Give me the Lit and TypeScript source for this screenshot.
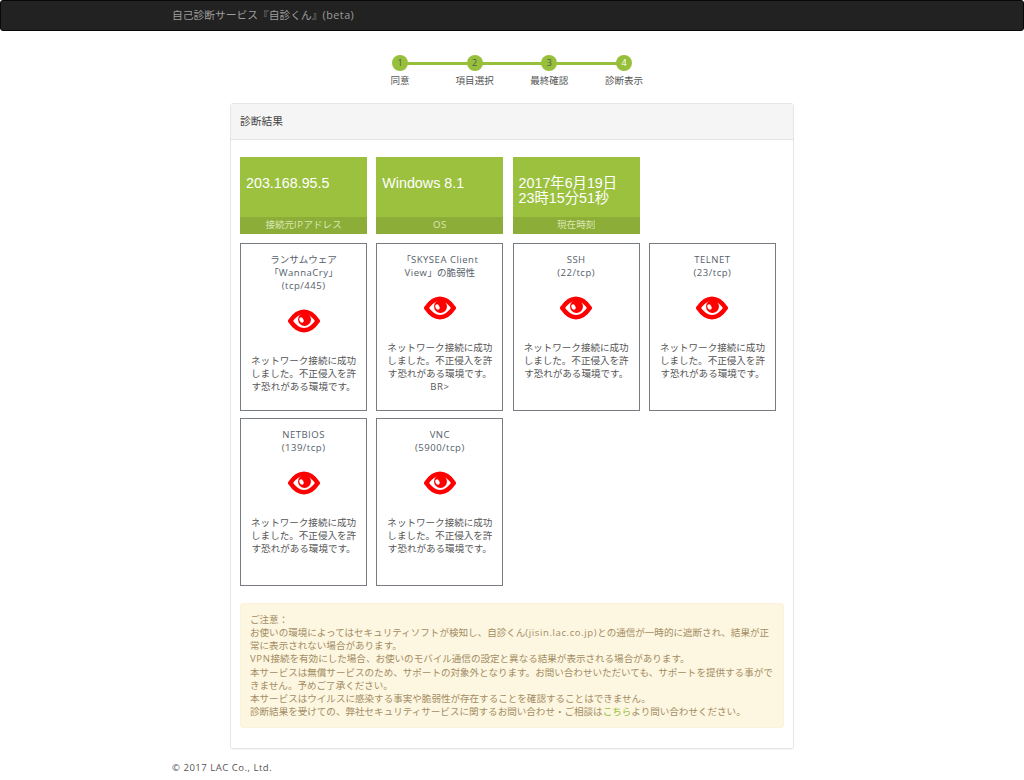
import { LitElement, html, css, svg } from "lit";
import { customElement } from "lit/decorators.js";

const MSG = "ネットワーク接続に成功しました。不正侵入を許す恐れがある環境です。";
const cards = [
  { t: ["ランサムウェア", "「WannaCry」", "(tcp/445)"], extra: "" },
  { t: ["「SKYSEA Client View」の脆弱性"], extra: "BR>" },
  { t: ["SSH", "(22/tcp)"], extra: "" },
  { t: ["TELNET", "(23/tcp)"], extra: "" },
  { t: ["NETBIOS", "(139/tcp)"], extra: "" },
  { t: ["VNC", "(5900/tcp)"], extra: "" },
];
const tiles = [
  { v: ["203.168.95.5"], l: "接続元IPアドレス" },
  { v: ["Windows 8.1"], l: "OS" },
  { v: ["2017年6月19日", "23時15分51秒"], l: "現在時刻" },
];
const steps = ["同意", "項目選択", "最終確認", "診断表示"];

/* The reference's Latin runs are set wider than its kana; wrap them so only they get the extra tracking. */
const t = (s: string) =>
  s.split(/([\x21-\x7e©](?:[\x20-\x7e©]*[\x21-\x7e©])?)/).map((p, i) =>
    i % 2 ? html`<span class="lat">${p}</span>` : p
  );

const eye = svg`<svg class="eye" viewBox="0 0 32 24" width="32" height="24" aria-hidden="true">
  <path fill="#fff" stroke="#f00" stroke-width="4.600" stroke-linejoin="round" d="M2.300 12C6.500 5.800 11 2.800 16 2.800S25.500 5.800 29.700 12C25.500 18.200 21 21.200 16 21.200S6.500 18.200 2.300 12z"/>
  <circle cx="16.500" cy="10.500" r="6.500" fill="#f00"/>
  <ellipse cx="13.500" cy="11" rx="2" ry="2.800" fill="#fff" transform="rotate(-25 13.500 11)"/>
</svg>`;

@customElement("app-root")
export class AppRoot extends LitElement {
  static styles = css`
    :host { display: block; width: 1024px; min-height: 780px; background: #fff; color: #555;
      font-family: "Open Sans", "Noto Sans CJK JP", sans-serif; font-size: 9.55px; line-height: 13.14px; text-spacing-trim: space-all; }
    * { box-sizing: border-box; }
    .lat { letter-spacing: .5px; }
    .nav { height: 31px; background: #222; border: 1px solid #080808; border-radius: 3px;
      padding-left: 171px; display: flex; align-items: center; color: #9d9d9d; font-size: 10.75px; }
    .steps { display: flex; justify-content: center; margin-top: 24px; height: 48px; }
    .step { width: 74.67px; position: relative; display: flex; flex-direction: column; align-items: center; }
    .dot { width: 16px; height: 16px; border-radius: 50%; background: #97c03a; color: #555; font-size: 9px;
      line-height: 16px; text-align: center; position: relative; z-index: 1; margin-bottom: 3px; }
    .step:last-child .dot { color: #fff; }
    .step:not(:last-child)::after { content: ""; position: absolute; top: 6.500px; left: 50%; width: 100%; height: 3px; background: #97c03a; }
    .panel { width: 564px; margin: 0 auto; border: 1px solid #e6e6e6; border-radius: 3px; height: 646px; box-shadow: 0 1px 1px rgba(0,0,0,.05); }
    .head { height: 36px; background: #f5f5f5; border-bottom: 1px solid #e3e3e3; padding: 0 9px; display: flex; align-items: center; font-size: 10.75px; color: #444; }
    .body { padding: 17px 9px 0; }
    .grid { display: grid; grid-template-columns: repeat(4, 127.200px); column-gap: 9.100px; row-gap: 7.500px; }
    .tile { height: 77px; background: #9bc13e; color: #fff; display: flex; flex-direction: column; }
    .val { flex: 1; padding: 18.500px 0 0 6px;
      font-family: "Liberation Sans", "Noto Sans CJK JP", sans-serif; font-size: 14.300px; line-height: 15px; }
    .lab { height: 17px; background: #8cad38; color: #dbe8b4; text-align: center; line-height: 16px; }
    .tiles { margin-bottom: 9px; }
    .card { height: 167.500px; border: 1px solid #767c82; padding: 8.500px 9px 0; text-align: center; display: flex; flex-direction: column; align-items: center; }
    .ct { padding: 0 6px; color: #55606a; }
    .eye { display: block; margin: 17.500px 0 20.500px; flex: none; }
    .alert { margin-top: 17.500px; height: 125px; background: #fdf6e1; border: 1px solid #fbf2db; border-radius: 3px;
      padding: 9px 7px 9px 9px; color: #a38d62; }
    .alert .lat { letter-spacing: .6px; }
    .alert a { color: #97c03a; text-decoration: none; }
    .foot { padding: 12px 0 0 172px; }
  `;
  render() {
    return html`
      <div class="nav"><span>${t("自己診断サービス『自診くん』(beta)")}</span></div>
      <div class="steps">
        ${steps.map((s, i) => html`<div class="step"><div class="dot">${i + 1}</div><div>${s}</div></div>`)}
      </div>
      <div class="panel">
        <div class="head">診断結果</div>
        <div class="body">
          <div class="grid tiles">
            ${tiles.map((x) => html`<div class="tile"><div class="val">${x.v.map((v) => html`<div>${v}</div>`)}</div><div class="lab">${t(x.l)}</div></div>`)}
          </div>
          <div class="grid">
            ${cards.map((c) => html`<div class="card">
              <div class="ct">${c.t.map((x) => html`<div>${t(x)}</div>`)}</div>
              ${eye}
              <div>${MSG}${c.extra ? html`<br />${t(c.extra)}` : ""}</div>
            </div>`)}
          </div>
          <div class="alert">
            ご注意：<br />
            ${t("お使いの環境によってはセキュリティソフトが検知し、自診くん(jisin.lac.co.jp)との通信が一時的に遮断され、結果が正常に表示されない場合があります。")}<br />
            ${t("VPN接続を有効にした場合、お使いのモバイル通信の設定と異なる結果が表示される場合があります。")}<br />
            本サービスは無償サービスのため、サポートの対象外となります。お問い合わせいただいても、サポートを提供する事ができません。予めご了承ください。<br />
            本サービスはウイルスに感染する事実や脆弱性が存在することを確認することはできません。<br />
            診断結果を受けての、弊社セキュリティサービスに関するお問い合わせ・ご相談は<a href="#">こちら</a>より問い合わせください。
          </div>
        </div>
      </div>
      <div class="foot">${t("© 2017 LAC Co., Ltd.")}</div>
    `;
  }
}
